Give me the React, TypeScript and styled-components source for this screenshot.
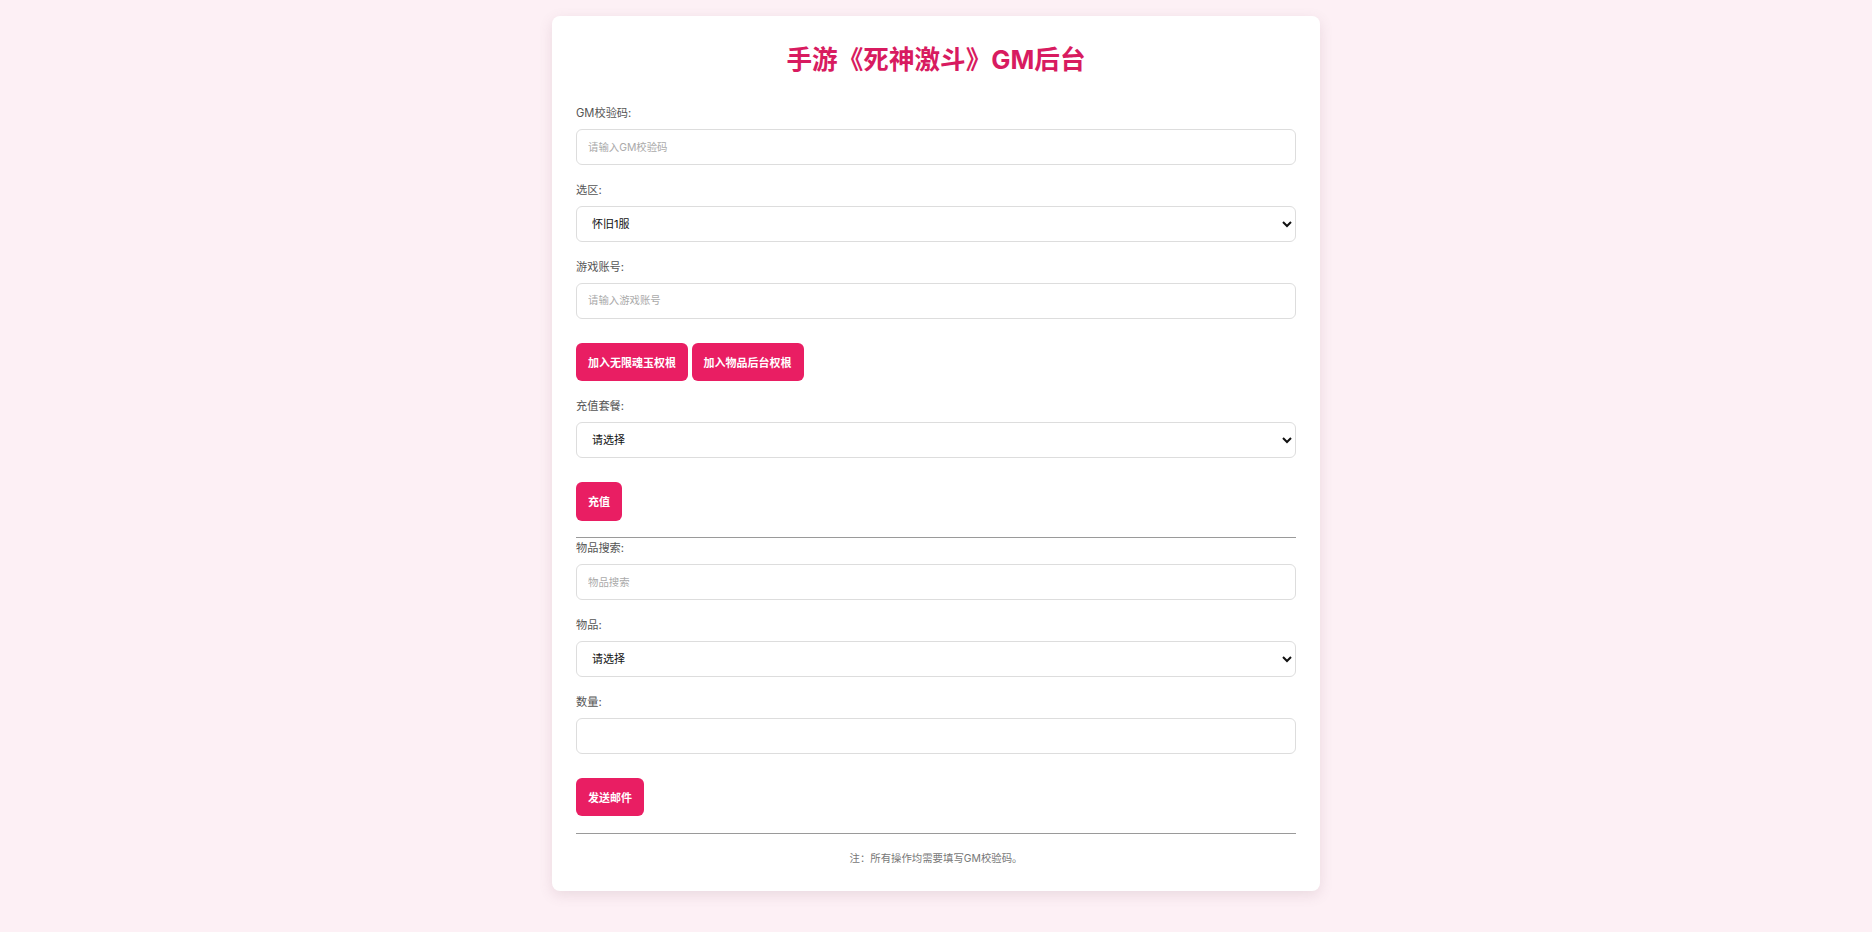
import React from 'react';
import styled, { createGlobalStyle } from 'styled-components';

const pink = '#e91e63';
const fontStack = `Inter, 'Noto Sans CJK SC', 'Noto Sans', sans-serif`;

const GlobalStyle = createGlobalStyle`
  html, body {
    margin: 0;
    padding: 0;
    background: #fdf0f5;
    font-family: ${fontStack};
  }
  * {
    box-sizing: border-box;
  }
`;

const Page = styled.div`
  min-height: 100vh;
  padding: 16px 0 40px;
  background: #fdf0f5;
`;

const Card = styled.div`
  width: 768px;
  margin: 0 auto;
  padding: 24px 24px 24px;
  background: #fff;
  border-radius: 8px;
  box-shadow: 0 4px 14px rgba(120, 80, 100, 0.14);
`;

const Title = styled.h1`
  margin: 4px 0 29px;
  font-size: 25.6px;
  line-height: 32px;
  font-weight: 700;
  text-align: center;
  color: #d81b60;
`;

const Field = styled.div`
  margin-bottom: 16.5px;
`;

const Label = styled.label`
  display: block;
  margin-bottom: 7px;
  font-size: 11.2px;
  line-height: 17px;
  color: #555;
`;

const TextInput = styled.input`
  display: block;
  width: 100%;
  height: 36px;
  padding: 0 11px;
  border: 1px solid #ddd;
  border-radius: 6px;
  background: #fff;
  font-family: ${fontStack};
  font-size: 10.4px;
  color: #222;
  outline: none;

  &::placeholder {
    color: #aaa;
  }
`;

const Select = styled.select`
  display: block;
  width: 100%;
  height: 36.5px;
  padding: 0 7px 0 11px;
  border: 1px solid #ddd;
  border-radius: 6px;
  background: #fff;
  font-family: ${fontStack};
  font-size: 11px;
  color: #111;
  outline: none;
`;

/* margin-top collapses with the field above: 24px total */
const ButtonRow = styled.div`
  display: flex;
  gap: 3.5px;
  margin: 24px 0 16.5px;
`;

const PrimaryButton = styled.button`
  height: 38.5px;
  padding: 0 12px;
  border: none;
  border-radius: 6px;
  background: ${pink};
  color: #fff;
  font-family: ${fontStack};
  font-size: 11px;
  font-weight: 700;
  cursor: pointer;
`;

const Divider = styled.hr`
  height: 0;
  margin: 0 0 2px;
  border: none;
  border-top: 1.5px solid #9a9a9a;
`;

const Note = styled.p`
  margin: 16px 0 0;
  font-size: 10.4px;
  line-height: 17px;
  text-align: center;
  color: #777;
`;

export default function App() {
  return (
    <>
      <GlobalStyle />
      <Page>
        <Card>
          <Title>手游《死神激斗》GM后台</Title>

          <Field>
            <Label>GM校验码:</Label>
            <TextInput type="text" placeholder="请输入GM校验码" />
          </Field>

          <Field>
            <Label>选区:</Label>
            <Select defaultValue="1">
              <option value="1">怀旧1服</option>
            </Select>
          </Field>

          <Field>
            <Label>游戏账号:</Label>
            <TextInput type="text" placeholder="请输入游戏账号" />
          </Field>

          <ButtonRow>
            <PrimaryButton>加入无限魂玉权根</PrimaryButton>
            <PrimaryButton>加入物品后台权根</PrimaryButton>
          </ButtonRow>

          <Field>
            <Label>充值套餐:</Label>
            <Select defaultValue="">
              <option value="">请选择</option>
            </Select>
          </Field>

          <ButtonRow>
            <PrimaryButton>充值</PrimaryButton>
          </ButtonRow>

          <Divider />

          <Field>
            <Label>物品搜索:</Label>
            <TextInput type="text" placeholder="物品搜索" />
          </Field>

          <Field>
            <Label>物品:</Label>
            <Select defaultValue="">
              <option value="">请选择</option>
            </Select>
          </Field>

          <Field>
            <Label>数量:</Label>
            <TextInput type="number" />
          </Field>

          <ButtonRow>
            <PrimaryButton>发送邮件</PrimaryButton>
          </ButtonRow>

          <Divider />

          <Note>注：所有操作均需要填写GM校验码。</Note>
        </Card>
      </Page>
    </>
  );
}
